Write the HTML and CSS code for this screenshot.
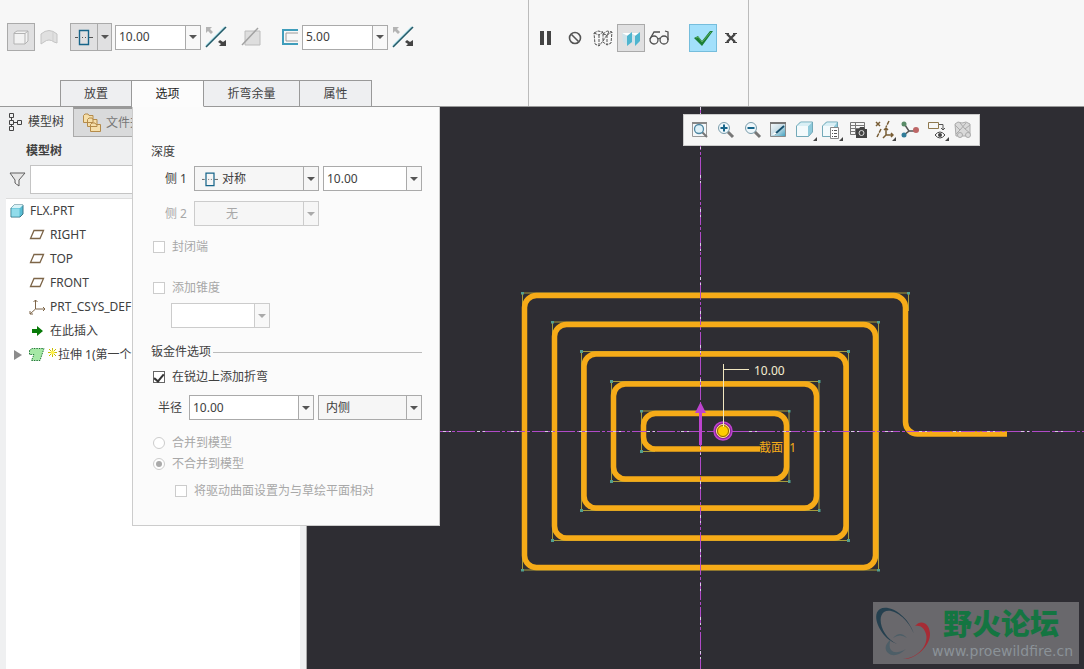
FILE: index.html
```html
<!DOCTYPE html>
<html lang="zh-CN">
<head>
<meta charset="utf-8">
<title>FLX.PRT</title>
<link rel="stylesheet" href="styles.css">
</head>
<body>
<svg class="defs" aria-hidden="true">
  <defs>
    <linearGradient id="sky" x1="0" y1="0" x2="1" y2="1"><stop offset="0" stop-color="#f4f8fa"/><stop offset=".5" stop-color="#c8dde6"/><stop offset="1" stop-color="#3aa0c0"/></linearGradient>
    <symbol id="flip" viewBox="0 0 22 22">
      <path d="M1 20 20 1" stroke="#b5e3ec" stroke-width="2"/><path d="M1 21 21 1" stroke="#245a68" stroke-width="1.600"/>
      <path d="M1 1h6L5 3l3 3-2 2-3-3-2 2z" fill="#b4b4b4"/><path d="M21 20h-7l2-2-3-2 2-2 3 2 3-2z" fill="#444"/>
    </symbol>
    <symbol id="symmetric" viewBox="0 0 18 18">
      <path d="M0 9.500h3m11 0h4M7 9.500h1m2 0h1" stroke="#555"/><path d="M4.500 2.500h9v14h-9z" fill="none" stroke="#17658a" stroke-width="1.400"/>
    </symbol>
    <symbol id="plane" viewBox="0 0 16 16"><path d="M5 3.500h9.500l-3.500 8H1.500z" fill="none" stroke="#7d6548" stroke-width="1.300"/></symbol>
  </defs>
</svg>

<header class="ribbon">
  <section class="feature">
    <div class="tools">
      <button class="tool pressed" aria-label="实体"><svg width="20" height="20"><path d="M3 6l3-2h11v10l-3 3H3z" fill="#f2f2f2" stroke="#b3b3b3"/><path d="M3 6.500h11V17M14 6.500l3-2.500" fill="none" stroke="#b3b3b3"/></svg></button>
      <button class="plain surface" aria-label="曲面"><svg width="18" height="18"><path d="M1 6Q9-1 17 6v9l-3-1q-5-4-10 0l-3 2z" fill="#e0e0e0" stroke="#c4c4c4"/><path d="M13 3v10" stroke="#cfcfcf"/></svg></button>
      <div class="split">
        <button class="tool pressed" aria-label="对称"><svg width="18" height="18"><use href="#symmetric"/></svg></button>
        <button class="tool pressed drop" aria-label="深度选项"><span class="caret"></span></button>
      </div>
      <div class="combo main"><input aria-label="深度值" value="10.00"><button aria-label="深度列表"><span class="caret"></span></button></div>
      <button class="plain flip" aria-label="反向"><svg width="22" height="22"><use href="#flip"/></svg></button>
      <button class="plain cut" aria-label="移除材料"><svg width="20" height="20"><path d="M4 4h15v14H4z" fill="#dedede" stroke="#bcbcbc"/><path d="M1 18 17 1" stroke="#a2a2a2" stroke-width="1.500"/></svg></button>
      <svg class="thick" width="17" height="18"><path d="M17 2H2v14h15" fill="none" stroke="#3f9dbb" stroke-width="2"/><path d="M17 5H5v8h12" fill="none" stroke="#9a9a9a"/></svg>
      <div class="combo main"><input aria-label="厚度" value="5.00"><button aria-label="厚度列表"><span class="caret"></span></button></div>
      <button class="plain flip" aria-label="厚度反向"><svg width="22" height="22"><use href="#flip"/></svg></button>
    </div>
    <nav class="tabs">
      <button>放置</button><button class="active">选项</button><button class="wide">折弯余量</button><button>属性</button>
    </nav>
  </section>
  <section class="confirm">
    <button class="tool" aria-label="暂停"><svg width="16" height="16"><path d="M1 1h4v14H1zM8 1h4v14H8z" fill="#444"/></svg></button>
    <button class="tool" aria-label="无预览"><svg width="14" height="14"><circle cx="7" cy="7" r="5.500" fill="none" stroke="#555" stroke-width="1.600"/><path d="m3.500 3.500 7 7" stroke="#555" stroke-width="1.600"/></svg></button>
    <button class="tool" aria-label="分离"><svg width="20" height="20" fill="none" stroke="#555"><path d="M1 5l5 2 4-3v9l-4 5-4-2zM6 7v11M1 5l4-2 5 1M10 13l6-9M10 6l4 1 5-3-1 11-4 2-4-3M14 7v10M10 6l4-3 5 1" stroke-dasharray="3 1"/></svg></button>
    <button class="tool pressed" aria-label="连接"><svg width="20" height="20"><path d="M1 5h9v7l-4-3zM10 5h9v7l-4-3z" fill="#fff"/><path d="M1 5l6 3v9l-5-3zM10 5l5 3v9l-5-3z" fill="#cfe3ea"/><path d="m6 8 5-4v10l-5 4zM14 8l5-4v9l-5 5z" fill="#4fb5cf"/></svg></button>
    <button class="tool" aria-label="预览"><svg width="20" height="18" fill="none" stroke="#505050" stroke-width="1.300"><circle cx="5" cy="11" r="4"/><circle cx="15" cy="11" r="4"/><path d="M1 10 5 3h6M9 10l2-1M19 11V3l-3-1"/></svg></button>
    <button class="tool ok" aria-label="确定"><svg width="20" height="18"><path d="M1 9 5 7l4 5 8-10 3 0L9 17z" fill="#1b7e36"/><path d="m3 9 2-1 4 5 9-10" fill="none" stroke="#5caf5e"/></svg></button>
    <button class="tool" aria-label="取消"><svg width="14" height="14"><path d="m3 3 8 8m0-8-8 8" stroke="#444" stroke-width="2.400"/><path d="M1 2.500h4M9 2.500h4M1 11.500h4m4 0h4" stroke="#444"/></svg></button>
  </section>
</header>

<main class="workspace">
  <aside class="sidebar">
    <div class="navtabs">
      <button class="active"><svg width="16" height="20" fill="none" stroke="#444"><path d="M1.500 1.500h4v4h-4zM1.500 8.500h4v4h-4zM1.500 14.500h4v4h-4zM9.500 8.500h4v4h-4zM3.500 5.500v3m0 4v2m2-4h4"/></svg>模型树</button>
      <button class="folder"><svg width="20" height="20" fill="#f6dfaa" stroke="#b48b4a"><path d="M1.500 2.500 3 1h3l1 1.500h4v7H1.500zM5.500 6.500 7 5h3l1 1.500h4v7H5.500zM8.500 11.500 10 10h3l1 1.500h4.500v7h-10z"/></svg>文件夹</button>
    </div>
    <h2>模型树</h2>
    <div class="filter">
      <svg width="17" height="16"><path d="M1 1h15l-6 7v6l-4-3V8z" fill="#e6e6e6" stroke="#5e5e5e"/><path d="M8 8v4" stroke="#fff"/></svg>
      <input aria-label="过滤">
    </div>
    <ul class="tree">
      <li class="root"><svg width="16" height="16"><path d="M2 5l3-3h9v9l-3 3H2z" fill="#58bdd4" stroke="#3b7787"/><path d="M2 5l3-3h9l-3 3z" fill="#d8f3f8"/><path d="M2.500 5.500h8v8h-8z" fill="#91dceb"/></svg>FLX.PRT</li>
      <li><svg width="16" height="16"><use href="#plane"/></svg>RIGHT</li>
      <li><svg width="16" height="16"><use href="#plane"/></svg>TOP</li>
      <li><svg width="16" height="16"><use href="#plane"/></svg>FRONT</li>
      <li><svg width="16" height="16" fill="none" stroke="#7d6548"><path d="M6.500 1v9H16M6.500 10 1 15M4.500 3l2-2 2 2M14 8l2 2-2 2M1 12v3h3"/></svg>PRT_CSYS_DEF</li>
      <li><svg width="16" height="16"><path d="M3 6h5V3l6 5-6 5v-3H3z" fill="#087a08"/></svg>在此插入</li>
      <li class="last"><svg width="8" height="10"><path d="M0 0 8 5 0 10z" fill="#8c8c8c"/></svg><svg width="17" height="16"><path d="M1.500 3.500 4 1.500h12l-4 12H3.500L6 7.500H1.500z" fill="#a5e8a5" stroke="#237a38" stroke-dasharray="1.500 1"/></svg><svg class="star" width="9" height="9"><path d="M4.500 0v9M0 4.500h9M1 1l7 7m0-7-7 7" stroke="#c9bd00"/><circle cx="4.500" cy="4.500" r="2" fill="#fff34d"/></svg>拉伸 1(第一个</li>
    </ul>
  </aside>

  <section class="viewport">
    <svg class="model">
      <defs><marker id="vertex" markerWidth="3" markerHeight="3" refX="1.500" refY="1.500" markerUnits="userSpaceOnUse"><path d="M0 0h3v3H0z" fill="#519f8e"/></marker></defs>
      <g transform="translate(393 324)">
        <path class="edge" marker-mid="url(#vertex)" d="M208.500-120V-138H-177.500V139H178.500V-109H-147.500V109.500H148.500V-79.500H-118.500V79.500H119V-49.500H-88.500V50.500H89V-20H-58.500V20.500H-45"/>
        <path class="wall" d="M307 3H217.500A12 12 0 0 1 205.500-9V-123.500A12 12 0 0 0 193.500-135.500H-163.500A12 12 0 0 0-175.500-123.500V124.500A12 12 0 0 0-163.500 136.500H163.500A12 12 0 0 0 175.500 124.500V-94.500A12 12 0 0 0 163.500-106.500H-133.500A12 12 0 0 0-145.500-94.500V95A12 12 0 0 0-133.500 107H134A12 12 0 0 0 146 95V-65A12 12 0 0 0 134-77H-104A12 12 0 0 0-116-65V65A12 12 0 0 0-104 77H104.500A12 12 0 0 0 116.500 65V-35A12 12 0 0 0 104.500-47H-74.500A12 12 0 0 0-86.500-35V36A12 12 0 0 0-74.500 48H74.500A12 12 0 0 0 86.500 36V-5.500A12 12 0 0 0 74.500-17.500H-44.500A12 12 0 0 0-56.500-5.500V6A12 12 0 0 0-44.500 18H60"/>
        <path class="axis" d="M-393 .500H3000"/>
        <path class="axis" d="M.500-324V3000"/>
        <path class="axis-dots" d="M-393 .500H3000"/>
        <path class="axis-dots" d="M.500-324V3000"/>
        <path d="M-1 14V-18H-5L.500-29 6-18H2V14z" fill="#bd43cf"/>
        <circle cx="23" cy="0" r="9" fill="#8a2698" stroke="#bd43cf" stroke-width="1.500"/>
        <circle cx="23" cy="0" r="6.500" fill="#ffcd00" stroke="#ffe79a"/>
        <circle cx="23" cy="0" r="5.500" fill="none" stroke="#8f6200"/>
        <path d="M23.500-4V-67M23.500-61.500H49" fill="none" stroke="#f1e7c0"/>
        <text class="dimension" x="54" y="-56">10.00</text>
        <text class="section-name" x="59" y="21">截面&nbsp; 1</text>
      </g>
    </svg>

    <div class="viewbar">
      <button aria-label="重新调整"><svg width="20" height="20"><path d="M2.500 3.500h14v13h-14z" fill="#f5f8fa" stroke="#999"/><path d="M2 3h15" stroke="#888" stroke-width="2"/><path d="m12 12 5 5" stroke="#777" stroke-width="2"/><circle cx="9" cy="9" r="4.500" fill="#dff1f8" stroke="#4d86a2" stroke-width="1.300"/></svg></button>
      <button aria-label="放大"><svg width="20" height="20"><path d="m11 11 6 6" stroke="#777" stroke-width="3"/><circle cx="8" cy="8" r="5.500" fill="#eef7fb" stroke="#7a9cab"/><path d="M8 4.500v7M4.500 8h7" stroke="#17658a" stroke-width="2"/></svg></button>
      <button aria-label="缩小"><svg width="20" height="20"><path d="m11 11 6 6" stroke="#777" stroke-width="3"/><circle cx="8" cy="8" r="5.500" fill="#eef7fb" stroke="#7a9cab"/><path d="M4.500 8h7" stroke="#17658a" stroke-width="2"/></svg></button>
      <button aria-label="重画"><svg width="20" height="20"><path d="M1.500 3.500h15v13h-15z" fill="url(#sky)" stroke="#8a8a8a"/><path d="M1 3h16" stroke="#777" stroke-width="2"/><path d="m6 14 9-8" stroke="#16506e" stroke-width="1.800"/><path d="m3 15 3-3 2 2z" fill="#fff"/></svg></button>
      <button class="more" aria-label="显示样式"><svg width="20" height="20"><path d="m1.500 6 4-4h12v10l-4 4.500h-12z" fill="#8fcadb" stroke="#73a9b8"/><path d="m2 6 4-3.500h11L13.500 6z" fill="#d9eff5"/><path d="M2 6h11v10H2z" fill="#f3fafc"/></svg></button>
      <button class="more" aria-label="已保存方向"><svg width="20" height="20"><path d="m1.500 6 4-4h11v11l-3 3.500h-12z" fill="#8fcadb" stroke="#73a9b8"/><path d="m2 6 4-3.500h10L13.500 6z" fill="#d9eff5"/><path d="M2 6h11v10H2z" fill="#f3fafc"/><path d="M9.500 7.500h8v11h-8z" fill="#fff" stroke="#888"/><path d="M11 10.500h1m1 0h3m-5 3h1m1 0h3m-5 3h1m1 0h3" stroke="#555"/></svg></button>
      <button aria-label="视图管理器"><svg width="20" height="20"><path d="M2.500 2.500h14v12h-14zM2 5.500h14M2 8.500h14M2 11.500h14M7.500 2v12" fill="none" stroke="#777"/><path d="M8 9h3l1-2h4l1 2h2v9H8z" fill="#444"/><circle cx="13.500" cy="13" r="2.500" fill="none" stroke="#ddd"/></svg></button>
      <button class="more" aria-label="基准显示"><svg width="20" height="20" fill="none" stroke="#785d35" stroke-width="1.500"><path d="m2 2 4 4m0-4L2 6"/><path d="M15 1l-3 6M7 9l-4 8" stroke-dasharray="4 1"/><path d="M12 8v7h7M12 15l-3 3M10 10l2-2 2 2M17 13l2 2-2 2"/></svg></button>
      <button aria-label="注释显示"><svg width="20" height="20"><path d="m5 5 4 6-5 4M9 11h7" fill="none" stroke="#555" stroke-width="1.500"/><circle cx="4" cy="4" r="2.500" fill="#5a8b68"/><circle cx="4" cy="15" r="2.500" fill="#317c99"/><circle cx="16" cy="10" r="3" fill="#bd6666"/></svg></button>
      <button class="more" aria-label="旋转中心"><svg width="20" height="20" fill="none"><path d="M1.500 2.500h10v6h-10z" stroke="#8f784e"/><path d="M12 4.500h4v5M14 8l2 2 2-2" stroke="#555"/><path d="M8 15q5-6 10 0-5 6-10 0z" fill="#fff" stroke="#444"/><circle cx="13" cy="15" r="2" fill="#444"/></svg></button>
      <button aria-label="透视图"><svg width="20" height="20" fill="#d9d9d9" stroke="#aaa"><path d="M2 4l3-2 4 1 4-1 4 2v10l-3 2H3z"/><path d="M2 5l5 5-4 4M17 5l-5 4 5 4M7 3l5 6M13 3 7 10" fill="none"/><circle cx="7" cy="15" r="2.500"/><circle cx="15" cy="15" r="2.500"/></svg></button>
    </div>

    <div class="watermark">
      <svg width="58" height="60" fill="none"><path d="M41 32C35 13 16 2 7 7-3 13 8 37 24 42 10 36 3 16 11 10c8-5 24 6 30 22" fill="#25404f"/><path d="M18 37q-9 8-3 14 7 6 18-4-11 6-15 1-3-4 0-11M20 36q7-8 14 0-7-5-14 0" fill="#4d5e67"/><path d="M42 24c6-7 14-3 15 7 1 13-15 27-27 26 15-1 26-14 23-25-2-6-5-9-11-8" fill="#a62c35"/></svg>
      <div><strong>野火论坛</strong><span>www.proewildfire.cn</span></div>
    </div>
  </section>
</main>

<form class="options">
  <h3>深度</h3>
  <div class="row side">
    <label for="side1">侧 1</label>
    <div class="select"><select id="side1" class="with-icon"><option>对称</option></select><svg class="icon" width="16" height="16"><use href="#symmetric"/></svg><span class="arrow"><span class="caret"></span></span></div>
    <div class="combo"><input aria-label="侧 1 深度" value="10.00"><button type="button" aria-label="深度列表"><span class="caret"></span></button></div>
  </div>
  <div class="row side second disabled">
    <label for="side2">侧 2</label>
    <div class="select"><select id="side2" class="indent" disabled><option>无</option></select><span class="arrow"><span class="caret"></span></span></div>
  </div>
  <label class="check disabled capped"><input type="checkbox" disabled>封闭端</label>
  <label class="check disabled taper"><input type="checkbox" disabled>添加锥度</label>
  <div class="combo angle disabled"><input aria-label="锥度" disabled><button type="button" aria-label="锥度列表" disabled><span class="caret"></span></button></div>
  <h3 class="ruled">钣金件选项</h3>
  <label class="check bends"><input type="checkbox" checked>在锐边上添加折弯</label>
  <div class="row radius">
    <label for="radius">半径</label>
    <div class="combo"><input id="radius" value="10.00"><button type="button" aria-label="半径列表"><span class="caret"></span></button></div>
    <div class="select"><select aria-label="半径位置"><option>内侧</option></select><span class="arrow"><span class="caret"></span></span></div>
  </div>
  <label class="check disabled merge"><input type="radio" name="merge" disabled>合并到模型</label>
  <label class="check disabled"><input type="radio" name="merge" checked disabled>不合并到模型</label>
  <label class="check disabled driving"><input type="checkbox" disabled>将驱动曲面设置为与草绘平面相对</label>
</form>
</body>
</html>
```
FILE: styles.css
```css
* { box-sizing: border-box; }
body {
  margin: 0;
  height: 100vh;
  display: flex;
  flex-direction: column;
  position: relative;
  overflow: hidden;
  background: #f7f7f7;
  color: #404040;
  font: 12px/20px "Noto Sans", "Noto Sans CJK SC", sans-serif;
}
button, input, select { font: inherit; color: inherit; margin: 0; padding: 0; border-radius: 0; }
button { border: 0; background: none; }
svg { flex: none; }
h2, h3, ul { margin: 0; padding: 0; font-size: 12px; }
.defs { position: absolute; width: 0; height: 0; }
.caret { border: 4px solid transparent; border-top-color: #555; border-bottom: 0; }

/* Ribbon */
.ribbon { display: flex; flex: none; border-bottom: 1px solid #999; }
.feature { width: 529px; border-right: 1px solid #bbb; }
.tools { display: flex; align-items: center; height: 80px; padding: 0 0 6px 7px; }
.tool { width: 28px; height: 28px; display: flex; align-items: center; justify-content: center; }
.pressed { background: #e0e0e1; border: 1px solid #aaa; }
.plain { display: flex; }
.surface { margin: 0 12px 0 5px; }
.split { display: flex; margin-right: 3px; }
.drop { width: 14px; border-left: 0; }
.flip { margin-left: 4px; }
.cut { margin: 0 20px 0 14px; }
.thick { margin-right: 4px; }
.tabs { display: flex; padding-left: 60px; margin-bottom: -1px; }
.tabs button { width: 72px; height: 27px; background: #eeeff1; border: 1px solid #999; border-left-width: 0; }
.tabs button:first-child { border-left-width: 1px; }
.tabs .wide { width: 96px; }
.tabs .active { background: #fcfcfc; border-bottom-color: #fcfcfc; color: #222; }
.confirm { display: flex; align-items: center; width: 220px; padding: 0 2px 30px 4px; border-right: 1px solid #bbb; }
.confirm .tool { flex: none; }
.confirm .ok { background: #a3e0fb; border: 1px solid #75bddc; margin-left: 16px; }

/* Combo boxes */
.combo { display: flex; min-width: 0; height: 25px; border: 1px solid #aaa; background: #fff; }
.combo input { flex: 1; min-width: 0; border: 0; padding-left: 3px; background: none; outline: 0; }
.combo button { flex: none; width: 15px; display: flex; align-items: center; justify-content: center; border-left: 1px solid #aaa; background: #f8f8f8; }
.main { width: 86px; }
.select { display: grid; height: 25px; border: 1px solid #aaa; background: #f6f6f6; }
.select > * { grid-area: 1 / 1; align-self: center; }
.select select { appearance: none; width: 100%; height: 23px; border: 0; background: none; padding-left: 7px; opacity: 1; }
.select .with-icon { padding-left: 27px; }
.select .indent { padding-left: 31px; }
.select .icon { margin-left: 7px; pointer-events: none; }
.arrow { justify-self: end; width: 15px; height: 23px; display: flex; align-items: center; justify-content: center; border-left: 1px solid #aaa; pointer-events: none; }
.disabled { color: #a8a8a8; }
.disabled .caret { border-top-color: #aaa; }
.disabled .select, .disabled .arrow, .combo.disabled, .disabled button { border-color: #ccc; }

/* Model tree */
.workspace { display: flex; flex: 1; min-height: 0; }
.sidebar { width: 307px; display: flex; flex-direction: column; background: #eff0f1; border-right: 1px solid #aaa; }
.navtabs { display: flex; height: 30px; }
.navtabs button { display: flex; align-items: center; gap: 4px; padding-left: 8px; width: 73px; white-space: nowrap; }
.navtabs .folder { width: 90px; background: #d9dadb; border: 1px solid #aaa; border-top: 2px solid #999; color: #777; }
.sidebar h2 { height: 28px; padding-left: 26px; line-height: 28px; }
.filter { display: flex; align-items: center; gap: 4px; padding-left: 9px; margin-bottom: 4px; }
.filter input { flex: 1; min-width: 0; height: 29px; border: 1px solid #c4c4c4; background: #fff; }
.tree { flex: 1; margin: 0 6px; background: #fff; border-top: 1px solid #ddd; list-style: none; }
.tree li { display: flex; align-items: center; gap: 5px; height: 24px; padding-left: 23px; white-space: nowrap; }
.tree .root { padding-left: 3px; }
.tree .last { padding-left: 8px; gap: 0; }
.last svg:first-child { margin-right: 6px; }
.last .star { margin: 0 1px 6px 3px; }

/* Graphics window */
.viewport { flex: 1; min-width: 0; position: relative; background: #2e2d33; overflow: hidden; }
.model { display: block; width: 100%; height: 100%; }
.wall { fill: none; stroke: #f6ab18; stroke-width: 5.5px; }
.edge { fill: none; stroke: #a79b3b; stroke-width: 1px; }
.axis { fill: none; stroke: #b04ac8; stroke-width: 1px; stroke-dasharray: 18 2 3 2; shape-rendering: crispEdges; }
.axis-dots { fill: none; stroke: #d8cbe5; stroke-width: 1px; stroke-dasharray: 3 3 2 26; shape-rendering: crispEdges; }
.dimension { fill: #f5eed2; font-size: 12px; }
.section-name { fill: #f6ab18; font-size: 12px; }
.viewbar { position: absolute; left: 376px; top: 7px; width: 297px; height: 32px; padding: 0 3px; display: flex; align-items: center; justify-content: space-between; background: #f6f6f6; border: 1px solid #ccc; }
.viewbar button { position: relative; width: 26px; height: 28px; display: flex; align-items: center; justify-content: center; }
.more::after { content: ""; position: absolute; right: 1px; bottom: 3px; border: 2px solid #444; border-top-color: transparent; border-left-color: transparent; }
.watermark { position: absolute; right: 5px; bottom: 5px; width: 206px; height: 62px; display: flex; gap: 1px; background: #69686c; }
.watermark strong { display: block; padding-left: 11px; font: 900 29px/40px "Noto Sans CJK SC", sans-serif; color: #147541; }
.watermark span { display: block; font: 14px/18px "DejaVu Sans", sans-serif; color: #8b9298; }

/* Options panel */
.options { position: absolute; left: 132px; top: 107px; width: 308px; padding: 33px 17px 23px 18px; display: flex; flex-direction: column; background: #fbfbfb; border: 1px solid #ccc; border-top: 0; }
.options h3 { font-weight: 400; line-height: 24px; }
.row { display: flex; align-items: center; gap: 4px; }
.row label, .row .select { flex: none; }
.side { margin-top: 2px; padding-left: 14px; }
.side label { width: 25px; white-space: nowrap; }
.side .select { width: 125px; }
.side .combo { flex: 1; }
.row.second { margin-top: 10px; }
.check { display: flex; align-items: center; gap: 7px; padding-left: 2px; margin-bottom: 1px; }
.check input { appearance: none; width: 12px; height: 12px; display: grid; place-items: center; background: #fff; border: 1px solid #666; }
.check.disabled input { border-color: #ccc; }
.check input[type="radio"] { border-radius: 50%; }
.check input[type="radio"]:checked::after { content: ""; width: 6px; height: 6px; border-radius: 50%; background: #aaa; }
.check input[type="checkbox"]:checked::after { content: ""; width: 4px; height: 8px; margin-bottom: 2px; border: solid #333; border-width: 0 2px 2px 0; rotate: 40deg; }
.capped { margin: 11px 0 21px; }
.taper { margin-bottom: 5px; }
.angle { width: 99px; margin: 0 0 12px 20px; }
.ruled { display: flex; align-items: center; gap: 2px; }
.ruled::after { content: ""; flex: 1; border-top: 1px solid #bbb; }
.bends { margin: 3px 0 8px; }
.radius { padding-left: 7px; margin-bottom: 13px; }
.radius label { width: 27px; }
.radius .combo { width: 125px; }
.row.radius .select { flex: 1; }
.driving { margin-top: 6px; padding-left: 24px; }
```
